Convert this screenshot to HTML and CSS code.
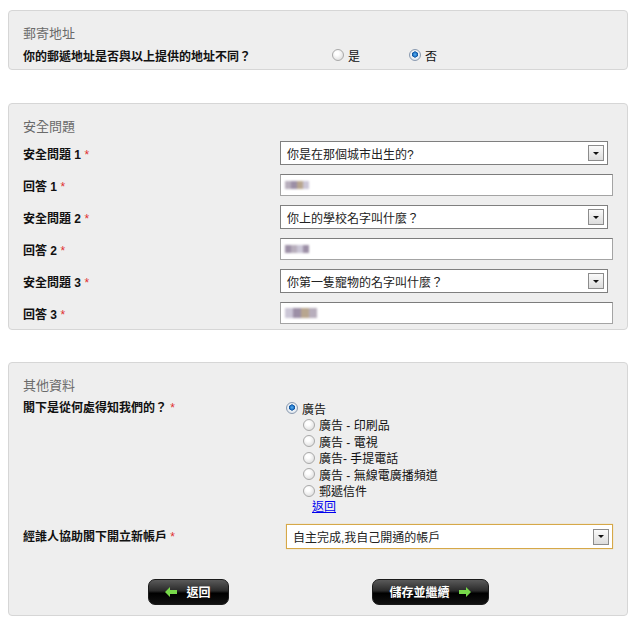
FILE: index.html
```html
<html lang="zh-Hant">

<head>
    <meta charset="UTF-8">
    <meta name="viewport" content="width=device-width, initial-scale=1.0">
    <title>帳戶資料</title>
    <link rel="stylesheet" href="styles.css">
</head>

<body>
    <div class="page">
        <section class="panel panel-mail">
            <h2 class="panel-title">郵寄地址</h2>
            <div class="row row-mail">
                <span class="field-label label-mail">你的郵遞地址是否與以上提供的地址不同？</span>
                <div class="radio-inline">
                    <span class="radio-opt"><span class="radio"></span>是</span>
                    <span class="radio-opt"><span class="radio checked"></span>否</span>
                </div>
            </div>
        </section>

        <section class="panel panel-security">
            <h2 class="panel-title">安全問題</h2>
            <div class="row">
                <span class="field-label label-security">安全問題 <b class="num">1</b> <i class="req">*</i></span>
                <div class="select">
                    <span class="select-txt">你是在那個城市出生的?</span>
                    <span class="select-btn"><span class="caret"></span></span>
                </div>
            </div>
            <div class="row">
                <span class="field-label label-security">回答 <b class="num">1</b> <i class="req">*</i></span>
                <div class="text-input">
                    <span class="masked"><i class="m1"></i><i class="m2"></i><i class="m3"></i><i class="m4"></i></span>
                </div>
            </div>
            <div class="row">
                <span class="field-label label-security">安全問題 <b class="num">2</b> <i class="req">*</i></span>
                <div class="select">
                    <span class="select-txt">你上的學校名字叫什麼？</span>
                    <span class="select-btn"><span class="caret"></span></span>
                </div>
            </div>
            <div class="row">
                <span class="field-label label-security">回答 <b class="num">2</b> <i class="req">*</i></span>
                <div class="text-input">
                    <span class="masked"><i class="m2"></i><i class="m1"></i><i class="m4"></i><i class="m2"></i></span>
                </div>
            </div>
            <div class="row">
                <span class="field-label label-security">安全問題 <b class="num">3</b> <i class="req">*</i></span>
                <div class="select">
                    <span class="select-txt">你第一隻寵物的名字叫什麼？</span>
                    <span class="select-btn"><span class="caret"></span></span>
                </div>
            </div>
            <div class="row">
                <span class="field-label label-security">回答 <b class="num">3</b> <i class="req">*</i></span>
                <div class="text-input">
                    <span class="masked masked-wide"><i class="m4"></i><i class="m2"></i><i class="m3"></i><i class="m1"></i></span>
                </div>
            </div>
        </section>

        <section class="panel panel-other">
            <h2 class="panel-title">其他資料</h2>
            <div class="row-list">
                <span class="field-label label-other">閣下是從何處得知我們的？ <i class="req">*</i></span>
                <ul class="radio-list">
                    <li class="radio-opt"><span class="radio checked"></span>廣告</li>
                    <li class="radio-opt sub"><span class="radio"></span>廣告 - 印刷品</li>
                    <li class="radio-opt sub"><span class="radio"></span>廣告 - 電視</li>
                    <li class="radio-opt sub"><span class="radio"></span>廣告- 手提電話</li>
                    <li class="radio-opt sub"><span class="radio"></span>廣告 - 無線電廣播頻道</li>
                    <li class="radio-opt sub"><span class="radio"></span>郵遞信件</li>
                    <li class="back-link"><a href="#">返回</a></li>
                </ul>
            </div>
            <div class="row row-agent">
                <span class="field-label label-other">經誰人協助閣下開立新帳戶 <i class="req">*</i></span>
                <div class="select select-focus">
                    <span class="select-txt">自主完成,我自己開通的帳戶</span>
                    <span class="select-btn"><span class="caret"></span></span>
                </div>
            </div>
            <div class="actions">
                <a class="btn" href="#">
                    <svg class="arrow" width="12" height="10" viewBox="0 0 12 10"><polygon points="0,5 5,0 5,3 12,3 12,7 5,7 5,10" /></svg>
                    返回
                </a>
                <a class="btn" href="#">
                    儲存並繼續
                    <svg class="arrow" width="12" height="10" viewBox="0 0 12 10"><polygon points="12,5 7,0 7,3 0,3 0,7 7,7 7,10" /></svg>
                </a>
            </div>
        </section>
    </div>
</body>

</html>
```

FILE: styles.css
```css
body {
    margin: 0;
    padding: 10px 8px 0 8px;
    background-color: white;
    font-family: "Liberation Sans", "Noto Sans CJK TC", sans-serif;
    font-size: 12px;
    color: #111;
}

.page {
    width: 620px;
}

.panel {
    background-color: #eeeeee;
    border: 1px solid #d6d6d6;
    border-radius: 4px;
    padding: 14px 14px 0 14px;
}

.panel-title {
    margin: 0 0 1px 0;
    font-size: 13px;
    font-weight: normal;
    line-height: 18px;
    color: #6a6a6a;
}

.row {
    display: flex;
    align-items: center;
    height: 32px;
}

.field-label {
    font-weight: bold;
    flex-shrink: 0;
}

.num {
    font-weight: bold;
}

.req {
    font-style: normal;
    font-weight: normal;
    color: #e03030;
}

/* mailing */
.panel-mail {
    padding-bottom: 3px;
}

.row-mail {
    height: 22px;
}

.label-mail {
    width: 309px;
}

.radio-inline {
    display: flex;
}

.radio-inline .radio-opt {
    width: 77px;
}

.radio-opt {
    display: flex;
    align-items: center;
}

.radio {
    width: 12px;
    height: 12px;
    border: 1px solid #a9a9a9;
    border-radius: 50%;
    margin-right: 4px;
    box-sizing: border-box;
    background: radial-gradient(circle at 40% 35%, #ffffff 20%, #e2e2e2 75%, #cfcfcf 100%);
}

.radio.checked {
    border-color: #8a9ab0;
    background: radial-gradient(circle at 50% 45%, #5ab4f0 0, #1d6fc4 28%, #0e4f96 38%, #eef3f8 45%, #d4dbe3 100%);
}

/* security */
.panel-security {
    margin-top: 33px;
}

.label-security {
    width: 257px;
}

.select {
    width: 328px;
    height: 24px;
    box-sizing: border-box;
    border: 1px solid #7f7f7f;
    background-color: white;
    display: flex;
    align-items: center;
    justify-content: space-between;
    padding: 0 3px 0 6px;
    color: #222;
}

.select-btn {
    width: 14px;
    height: 14px;
    border: 1px solid #8c8c8c;
    background: linear-gradient(#fafafa, #dcdcdc);
    display: flex;
    align-items: center;
    justify-content: center;
}

.caret {
    width: 0;
    height: 0;
    border-left: 3px solid transparent;
    border-right: 3px solid transparent;
    border-top: 3px solid #111;
}

.text-input {
    width: 335px;
    height: 22px;
    box-sizing: border-box;
    border: 1px solid #a4a4a4;
    border-top-color: #7c7c7c;
    background-color: white;
    display: flex;
    align-items: center;
    padding-left: 4px;
}

.masked {
    display: flex;
    filter: blur(0.8px);
}

.masked i {
    width: 6px;
    height: 8px;
}

.masked-wide i {
    width: 8px;
    height: 10px;
}

.m1 { background-color: #b7aebc; }
.m2 { background-color: #9c8fa6; }
.m3 { background-color: #b8a68f; }
.m4 { background-color: #cbc6d6; }

/* other info */
.panel-other {
    margin-top: 32px;
    padding-bottom: 10px;
}

.panel-other .panel-title {
    margin-bottom: 5px;
}

.row-list {
    display: flex;
    align-items: flex-start;
}

.label-other {
    width: 263px;
    line-height: 16px;
}

.radio-list {
    list-style: none;
    margin: 0;
    padding: 0;
}

.radio-list li {
    height: 16.5px;
}

.radio-opt.sub {
    padding-left: 17px;
}

.back-link {
    padding-left: 26px;
    line-height: 16px;
}

.back-link a {
    color: #0000ee;
}

.row-agent {
    margin-top: 5px;
}

.select-focus {
    height: 25px;
    border: 1px solid #d6a848;
    box-shadow: 0 0 1px #e8c880;
}

.actions {
    display: flex;
    justify-content: center;
    gap: 143px;
    margin-top: 26px;
}

.btn {
    height: 26px;
    box-sizing: border-box;
    border: 1px solid #1a1a1a;
    border-radius: 7px;
    background: linear-gradient(#5a5a5a 0, #2a2a2a 45%, #000 55%, #111 100%);
    color: white;
    font-weight: bold;
    text-decoration: none;
    display: flex;
    align-items: center;
    justify-content: center;
    gap: 9px;
}

.actions .btn:first-child {
    width: 81px;
}

.actions .btn:last-child {
    width: 117px;
}

.arrow polygon {
    fill: #77d94a;
}
```
